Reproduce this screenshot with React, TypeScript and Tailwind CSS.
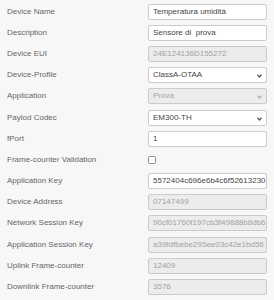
import React from 'react';

type Row =
  | { label: string; kind: 'text'; value: string; disabled?: boolean }
  | { label: string; kind: 'select'; value: string; disabled?: boolean }
  | { label: string; kind: 'check' };

const rows: Row[] = [
  { label: 'Device Name', kind: 'text', value: 'Temperatura umidità' },
  { label: 'Description', kind: 'text', value: 'Sensore di  prova' },
  { label: 'Device EUI', kind: 'text', value: '24E124136D155272', disabled: true },
  { label: 'Device-Profile', kind: 'select', value: 'ClassA-OTAA' },
  { label: 'Application', kind: 'select', value: 'Prova', disabled: true },
  { label: 'Paylod Codec', kind: 'select', value: 'EM300-TH' },
  { label: 'fPort', kind: 'text', value: '1' },
  { label: 'Frame-counter Validation', kind: 'check' },
  { label: 'Application Key', kind: 'text', value: '5572404c696e6b4c6f52613230' },
  { label: 'Device Address', kind: 'text', value: '07147499', disabled: true },
  { label: 'Network Session Key', kind: 'text', value: '90cf01760f197cb3f49888b8db6', disabled: true },
  { label: 'Application Session Key', kind: 'text', value: 'a39fdfbebe295ee03c42e1bd56', disabled: true },
  { label: 'Uplink Frame-counter', kind: 'text', value: '12409', disabled: true },
  { label: 'Downlink Frame-counter', kind: 'text', value: '3576', disabled: true },
];

function Chevron({ disabled }: { disabled?: boolean }) {
  return (
    <svg width="5" height="4" viewBox="0 0 5 4" className="absolute right-[4px] top-[6px]">
      <path d="M0.5 0.8 L2.5 3 L4.5 0.8" fill="none" stroke={disabled ? '#b0b0b0' : '#555'} strokeWidth="1.3" />
    </svg>
  );
}

function Field({ row }: { row: Row }) {
  if (row.kind === 'check') {
    return (
      <div className="w-[119px] h-4 flex items-center">
        <span className="w-[8px] h-[8px] border border-[#8a8a8a] rounded-[1.5px] bg-white" />
      </div>
    );
  }
  const box = `w-[119px] h-4 border border-[#cbcbcb] rounded-[2px] px-[4px] flex items-center overflow-hidden whitespace-pre ${
    row.disabled ? 'bg-[#ececec] text-[#a2a2a2]' : 'bg-white text-[#444]'
  }`;
  if (row.kind === 'select') {
    return (
      <div className={`relative ${box}`}>
        <span>{row.value}</span>
        <Chevron disabled={row.disabled} />
      </div>
    );
  }
  return (
    <div className={box}>
      <span>{row.value}</span>
    </div>
  );
}

export default function App() {
  return (
    <div className="w-[274px] h-[300px] bg-[#f7f7f7] pt-[1px] font-['Liberation_Sans',Arial,sans-serif] text-[8px] overflow-hidden">
      {rows.map((row) => (
        <div key={row.label} className="h-[21.2px] flex items-center">
          <div className="w-[148px] pl-[7px] text-[#666]">{row.label}</div>
          <Field row={row} />
        </div>
      ))}
    </div>
  );
}
